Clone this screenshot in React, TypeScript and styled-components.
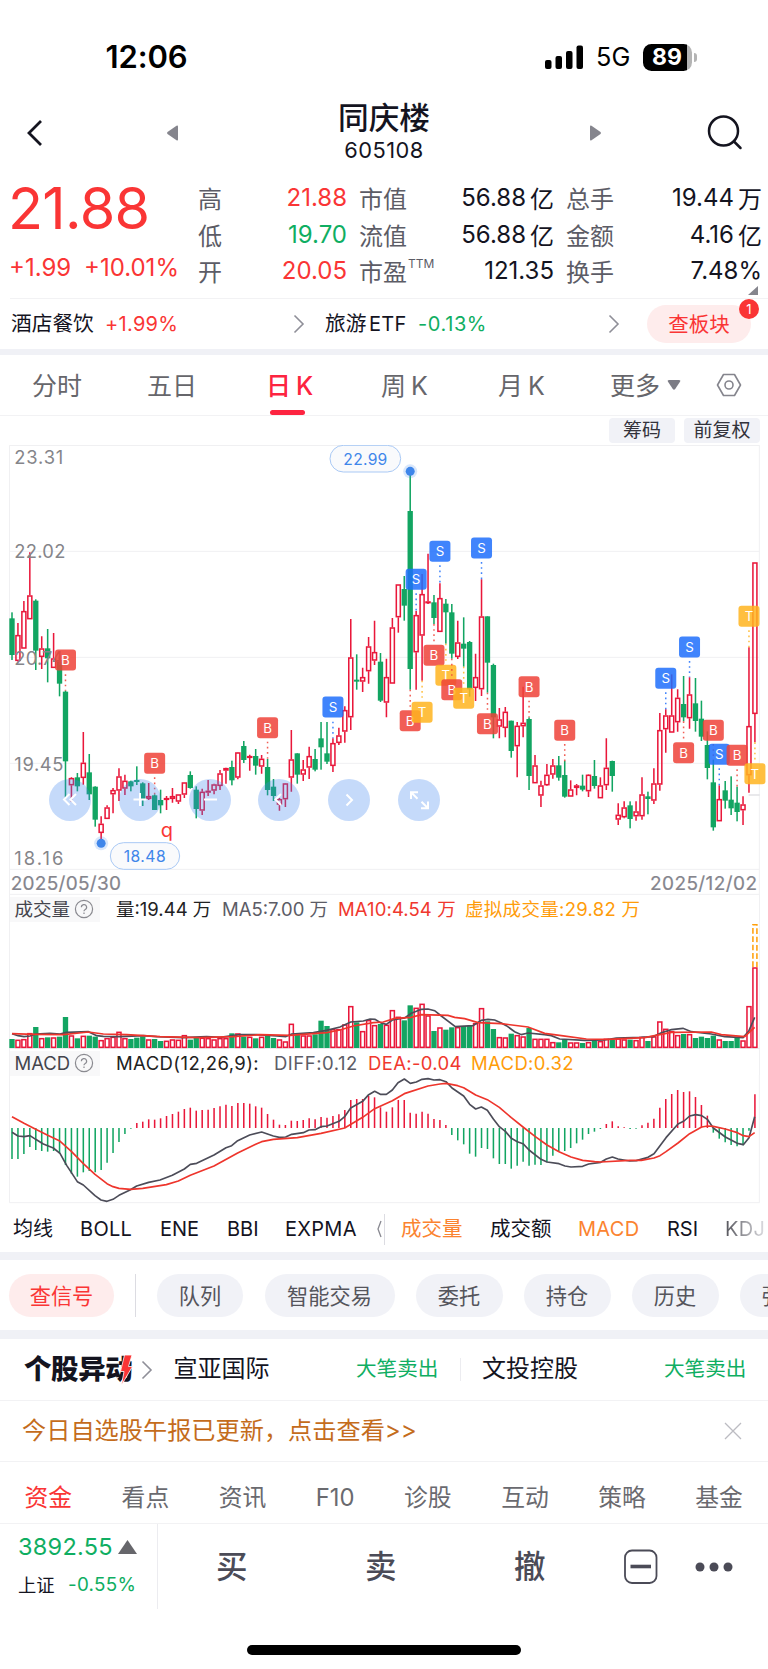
import React from 'react';
import styled, { createGlobalStyle, css } from 'styled-components';

const FONT = `Inter, "Noto Sans CJK SC", sans-serif`;
const RED = '#fa3535';
const GREEN = '#0fae62';
const INK = '#14141f';
const GREY = '#5c5c66';
const BLUE = '#3f86ea';

const Global = createGlobalStyle`
  * { box-sizing: border-box; }
  body { margin: 0; background: #fff; font-family: ${FONT}; color: ${INK}; }
`;

const Page = styled.main`
  width: 768px;
  height: 1669px;
  overflow: hidden;
  background: #fff;
`;

type TProps = { $w?: number; $s?: number; $c?: string; $ls?: number; $ml?: number; $wt?: number };
const T = styled.span<TProps>`
  flex: none;
  display: block;
  white-space: nowrap;
  line-height: 1.2;
  width: ${p => (p.$w ? `${p.$w}px` : 'auto')};
  font-size: ${p => p.$s ?? 24}px;
  color: ${p => p.$c ?? INK};
  letter-spacing: ${p => p.$ls ?? 0}px;
  margin-left: ${p => p.$ml ?? 0}px;
  font-weight: ${p => p.$wt ?? 400};
`;

const Row = styled.div<{ $h: number; $pl?: number; $pt?: number; $gap?: number; $line?: boolean }>`
  display: flex;
  align-items: center;
  gap: ${p => p.$gap ?? 0}px;
  height: ${p => p.$h}px;
  padding-left: ${p => p.$pl ?? 0}px;
  padding-top: ${p => p.$pt ?? 0}px;
  ${p => p.$line && css`border-bottom: 1px solid #f2f2f4;`}
  overflow: hidden;
`;
const Band = styled.div<{ $h: number }>`height: ${p => p.$h}px; background: #f0f1f6;`;

const Icon = styled.svg<{ $ml?: number }>`
  display: block;
  flex: none;
  margin-left: ${p => p.$ml ?? 0}px;
`;

/* ---------- status bar ---------- */
const StatusBar = styled.div`
  display: flex; align-items: center; height: 91px; padding: 23px 0 0 105.5px;
`;
const Battery = styled.div`
  width: 49px; height: 27px; margin-left: 13px; border-radius: 8.5px;
  background: linear-gradient(90deg, #000 44.5px, #b4b4b4 44.5px);
  color: #fff; font-size: 23px; font-weight: 700; line-height: 27px; padding-left: 9px;
`;
const BatteryTip = styled.i`width: 3px; height: 9px; margin-left: 2px; border-radius: 0 3px 3px 0; background: #b4b4b4;`;

/* ---------- title ---------- */
const TitleBar = styled.header`
  display: flex; align-items: center; height: 84px; padding-left: 26px; margin-bottom: 2px;
`;
const TitleText = styled.div`width: 100px; height: 66px; margin-left: 155px; text-align: center;`;
const Name = styled.h1`margin: 0; font-size: 30.7px; line-height: 36px; font-weight: 500; white-space: nowrap;`;
const Code = styled.div`font-size: 21.8px; line-height: 28px; letter-spacing: 0.5px;`;

/* ---------- quote ---------- */
const Quote = styled.section`
  display: flex; height: 122px; margin-left: 10px; border-bottom: 1px solid #f2f2f4;
`;
const PriceCol = styled.div`width: 188px;`;
const BigPrice = styled.div`font-size: 57.5px; line-height: 62px; color: ${RED}; letter-spacing: -0.7px; margin-left: -2px;`;
const Changes = styled.div`display: flex; height: 60px; align-items: center; margin: -1px 0 0 -1px;`;
const Stats = styled.div`display: grid; grid-template-columns: 149px 12px 195px 12px 196px; grid-auto-rows: 36.7px; padding-top: 2px;`;
const Stat = styled.div<{ $col: number }>`
  grid-column: ${p => p.$col}; display: flex; justify-content: space-between; align-items: center;
  font-size: 24px; white-space: nowrap; color: ${GREY}; position: relative;
`;
const Val = styled.span<{ $c?: string }>`display: flex; align-items: center; color: ${p => p.$c ?? INK}; gap: 4px;`;
const Sup = styled.sup`font-size: 12px; line-height: 1; position: absolute; left: 49px; top: 6px;`;
const Corner = styled.svg`position: absolute; right: 4px; bottom: -6px;`;

const Pill = styled.div<{ $w: number; $h: number; $ml?: number; $s: number; $hot?: boolean }>`
  flex: none; position: relative; width: ${p => p.$w}px; height: ${p => p.$h}px; margin-left: ${p => p.$ml ?? 0}px;
  border-radius: ${p => p.$h / 2}px; display: flex; align-items: center; justify-content: center;
  font-size: ${p => p.$s}px; white-space: nowrap; padding-bottom: 2px;
  color: ${p => (p.$hot ? RED : '#55555c')}; background: ${p => (p.$hot ? '#feecec' : '#f1f2f7')};
`;
const Badge = styled.b`
  position: absolute; left: 92px; top: -6px; width: 20px; height: 20px; border-radius: 50%;
  background: ${RED}; color: #fff; font-size: 13px; font-weight: 400; line-height: 20px; text-align: center;
`;
const Sector = styled.div`display: flex; align-items: center; height: 50px; padding-left: 11px;`;

/* ---------- period tabs ---------- */
const Tabs = styled.nav`display: flex; align-items: center; height: 61px; border-bottom: 1px solid #f2f2f4;`;
const Tab = styled.div<{ $ml: number; $w: number; $on?: boolean }>`
  flex: none; position: relative; display: flex; gap: 5px; align-items: center; height: 60px; font-size: 25px; white-space: nowrap;
  line-height: 1.2; padding-top: 1px;
  width: ${p => p.$w}px; margin-left: ${p => p.$ml}px; color: ${p => (p.$on ? '#fd2440' : '#66666b')};
  font-weight: ${p => (p.$on ? 500 : 400)};
  ${p => p.$on && css`&::after { content: ''; position: absolute; left: 4px; bottom: 0; width: 35px; height: 5px; border-radius: 2.5px; background: #fd2440; }`}
`;
const Chips = styled.div`display: flex; gap: 9px; height: 29px; padding: 2px 0 0 609px;`;
const Chip = styled.div<{ $w: number }>`
  width: ${p => p.$w}px; height: 25px; border-radius: 4px; background: #f1f2f7; color: #33333b;
  font-size: 19px; line-height: 25px; text-align: center; white-space: nowrap;
`;

/* ---------- charts ---------- */
const Plot = styled.svg`display: block; font-family: ${FONT};`;
const PriceArea = styled.div`position: relative; height: 450px;`;
const Tools = styled.div`position: absolute; left: 49px; top: 333.5px; display: flex; gap: 27.8px;`;
const Tool = styled.button`
  width: 42px; height: 42px; border: 0; padding: 0; border-radius: 50%; background: rgba(62, 132, 238, 0.3);
  svg { display: block; }
`;
const PlotHead = styled.div<{ $h: number }>`
  display: flex; align-items: center; height: ${p => p.$h}px; margin: 0 8px 0 9px; padding-top: 1px;
  border-left: 1px solid #f0f0f2; border-right: 1px solid #f0f0f2;
`;
const HeadTag = styled.div`
  display: flex; align-items: center; width: 90px; height: 25px; padding-left: 4.5px; background: #f8f8f9; margin-right: 16px; flex: none;
`;

/* one row per session: [up, high, bodyTop, bodyBottom, low, volumeTop, macdEnd] */
const days: number[][] = [
[0,517,535,645,660,447,807],[1,549,585,663,665,450,807],[1,483,513,626,626,448,792],[1,337,466,538,538,430,771],[0,478,482,632,690,411,780],
[1,589,625,651,687,445,783],[0,567,625,655,727,442,785],[1,579,655,684,684,443,783],[0,650,660,731,769,440,790],[0,752,755,964,1072,381,825],
[1,1012,1014,1036,1085,437,851],[0,999,1012,1039,1054,445,860],[1,876,968,1014,1034,438,847],[0,942,997,1063,1080,437,843],[0,1039,1040,1139,1160,440,847],
[1,1129,1151,1179,1198,451,840],[1,1096,1102,1137,1137,445,818],[1,1044,1050,1063,1120,441,789],[1,985,1009,1052,1083,426,756],[1,1004,1022,1046,1065,445,732],
[0,1022,1024,1039,1054,447,716],[0,979,1020,1026,1035,443,699],[0,1027,1030,1077,1098,440,695],[1,1029,1068,1077,1080,449,688],[0,1063,1066,1110,1110,447,689],
[0,1049,1080,1096,1120,453,685],[1,1068,1074,1080,1110,453,678],[1,1044,1068,1077,1088,449,672],[1,1063,1063,1085,1092,450,665],[1,1027,1027,1064,1074,436,657],
[0,994,1005,1044,1046,449,653],[0,1039,1049,1107,1135,444,662],[1,1046,1055,1112,1125,444,660],[1,1020,1052,1058,1068,445,659],[1,1031,1033,1052,1063,449,654],
[1,990,1000,1038,1050,445,649],[1,983,984,992,1031,445,644],[0,962,981,1021,1036,430,648],[1,936,937,1013,1018,431,639],[0,903,918,960,969,440,639],
[1,944,948,952,992,441,641],[0,927,948,977,1004,445,649],[1,945,956,980,1001,441,653],[0,957,981,1050,1066,436,672],[0,1017,1040,1068,1083,444,689],
[1,1074,1077,1094,1112,449,704],[1,1029,1030,1078,1101,455,705],[1,870,958,1013,1055,402,692],[0,940,940,1004,1031,434,693],[1,960,988,1004,1023,437,690],
[1,920,948,983,1017,437,685],[0,927,957,989,994,433,688],[0,846,895,922,989,392,681],[0,846,940,965,972,408,683],[1,895,909,978,996,418,678],
[1,863,886,909,915,418,673],[1,799,810,875,908,404,660],[1,537,652,832,870,349,630],[0,643,719,725,749,397,627],[1,683,711,725,756,424,627],
[1,591,619,694,731,391,618],[1,542,636,662,675,406,622],[0,639,665,782,786,402,652],[1,656,711,788,832,405,665],[1,534,562,731,731,361,652],
[1,433,433,532,578,381,630],[0,408,447,497,542,391,630],[0,100,213,687,749,346,668],[1,513,525,637,749,354,671],[1,402,462,587,722,342,665],
[1,341,484,489,492,377,671],[0,465,487,534,552,423,687],[1,430,474,576,576,413,690],[0,477,491,517,611,419,705],[0,492,517,641,656,412,735],
[1,542,607,651,657,412,751],[0,532,611,626,680,408,763],[0,603,606,748,770,408,791],[1,641,711,744,783,400,800],[1,418,529,748,768,355,774],
[0,529,529,668,758,394,777],[0,671,675,832,895,417,805],[1,804,838,860,895,442,822],[1,801,815,864,892,443,822],[0,842,842,933,953,431,836],
[1,846,857,919,1012,436,827],[1,740,848,859,892,440,815],[0,832,837,1008,1050,414,827],[1,945,976,1030,1030,447,824],[1,1022,1036,1067,1101,447,825],
[1,972,1004,1036,1038,447,817],[1,957,976,1004,1016,457,797],[0,948,976,1013,1022,457,785],[0,962,1005,1070,1073,447,783],[1,1021,1048,1070,1070,458,774],
[1,1032,1036,1044,1066,458,760],[0,1004,1037,1049,1054,459,749],[1,1003,1004,1054,1071,457,732],[0,960,1008,1038,1046,453,725],[1,1012,1036,1075,1075,454,717],
[1,895,983,1036,1050,447,702],[0,962,963,1008,1055,449,694],[1,1090,1124,1139,1155,446,709],[1,1084,1102,1132,1135,449,712],[0,1084,1096,1137,1165,449,717],
[1,1084,1114,1129,1142,451,716],[1,1012,1063,1129,1139,441,706],[0,1055,1069,1077,1123,453,698],[1,985,1030,1082,1092,440,686],[1,819,870,1034,1052,395,653],
[1,808,826,868,938,417,627],[1,703,826,878,878,424,612],[1,748,773,847,875,436,600],[0,708,792,832,844,432,606],[1,712,763,835,866,433,604],
[0,714,790,843,875,444,621],[0,782,836,890,903,440,645],[0,874,915,984,1018,444,677],[0,960,1027,1162,1172,437,728],[1,1036,1077,1144,1144,449,746],
[0,1023,1051,1082,1106,453,757],[0,1009,1079,1105,1125,453,765],[0,1040,1088,1116,1144,442,769],[1,1069,1093,1111,1155,452,766],[1,622,858,1006,1058,349,722],
[1,367,367,822,907,233,613],
];
const X = (i: number) => 36 + 17.83 * i;
const UP = '#e9173a';
const DOWN = '#12a562';

/* [session, kind, tagCentre, dotsFrom, dotsTo] */
const marks: [number, 'B' | 'S' | 'T', number, number, number][] = [
  [9, 'B', 660, 703, 752], [24, 'B', 970, 1012, 1063], [43, 'B', 863, 905, 957], [54, 'S', 801, 845, 895],
  [67, 'B', 842, 749, 800], [68, 'S', 418, 460, 513], [69, 'T', 817, 722, 775], [71, 'B', 646, 552, 605],
  [72, 'S', 334, 376, 430], [73, 'T', 706, 611, 664], [74, 'B', 749, 656, 708], [76, 'T', 775, 680, 735],
  [79, 'S', 324, 366, 418], [80, 'B', 851, 758, 810], [87, 'B', 740, 782, 832], [93, 'B', 871, 912, 965],
  [110, 'S', 715, 757, 808], [113, 'B', 938, 844, 896], [114, 'S', 621, 663, 712], [118, 'B', 871, 912, 960],
  [119, 'S', 943, 985, 1036], [122, 'B', 946, 988, 1040], [124, 'T', 529, 571, 622], [125, 'T', 1001, 907, 960],
];
const markColor = { B: '#ef4238', S: '#1f6ffb', T: '#ffb41e' };

const ma5 = '36,431 54,437 72,440 90,438 107,432 150,430 180,432 200,427 265,425 290,437 310,439 360,440 430,437 470,440 550,443 620,440 660,442 720,434 770,434 830,438 857,440 875,432 940,428 980,421 1020,411 1052,396 1090,393 1110,387 1125,388 1143,399 1159,403 1177,390 1214,384 1234,370 1264,358 1284,357 1304,362 1324,378 1366,410 1419,407 1444,391 1464,388 1484,390 1504,399 1519,407 1544,425 1564,434 1584,429 1634,434 1654,437 1679,447 1754,451 1814,450 1849,444 1924,442 1959,440 1984,428 2014,419 2049,415 2074,425 2134,432 2174,440 2229,443 2246,424 2264,382';
const ma10 = '36,431 100,433 190,434 265,426 310,432 380,434 480,440 600,443 700,440 780,434 870,436 980,428 1020,420 1060,408 1120,398 1150,396 1184,385 1234,382 1264,374 1344,376 1364,382 1394,386 1434,398 1504,401 1584,411 1634,430 1684,437 1759,447 1824,448 1934,443 1964,437 2014,427 2134,426 2164,434 2234,440 2264,412';
const diff = '36,727 54,738 72,740 90,737 107,748 130,762 160,774 180,790 200,826 232,875 250,885 285,917 303,930 321,934 339,928 357,916 390,900 410,888 446,877 480,870 517,856 553,837 571,823 590,820 642,795 678,773 695,767 713,752 749,735 785,726 820,738 838,742 857,741 875,733 910,728 927,720 945,719 963,710 981,708 1017,694 1034,680 1052,654 1088,634 1106,614 1124,604 1141,613 1159,613 1177,600 1194,578 1213,567 1231,580 1249,576 1266,568 1284,566 1302,570 1320,569 1338,575 1356,594 1391,618 1409,643 1427,657 1444,651 1462,661 1480,687 1498,710 1516,724 1534,745 1552,755 1569,761 1587,780 1623,808 1641,816 1677,821 1695,828 1713,831 1748,829 1766,822 1802,817 1819,807 1837,801 1854,807 1889,813 1909,812 1944,802 1962,791 1998,743 2034,702 2052,693 2069,678 2087,674 2105,677 2123,689 2140,714 2176,741 2212,760 2230,764 2247,743 2264,680';
const dea = '36,680 72,700 107,718 143,736 178,752 214,784 250,821 285,853 321,881 339,890 357,895 392,898 428,895 499,884 535,873 571,856 642,828 713,789 767,763 785,755 820,748 892,743 963,730 1034,714 1088,682 1124,656 1177,632 1213,611 1284,588 1320,582 1338,580 1373,587 1391,593 1427,615 1462,629 1498,652 1534,683 1569,711 1605,739 1641,765 1677,785 1713,801 1748,811 1784,815 1802,816 1889,811 1924,811 1962,804 1980,797 1998,785 2034,759 2069,731 2105,711 2123,708 2140,709 2176,717 2212,728 2230,737 2247,740 2264,728';

const Frame = ({ y1, y2 }: { y1: number; y2: number }) => (
  <path d={`M28.5 ${y1}V${y2}M2278 ${y1}V${y2}`} stroke="#f0f0f2" strokeWidth="3" />
);

const AxisLabel = ({ y, children }: { y: number; children: string }) => (
  <text x={43} y={y + 20} fontSize={55} fill="#85858a" textLength={children.startsWith('22') ? 153 : 147}>{children}</text>
);

const PriceChart = () => (
  <Plot width="768" height="450" viewBox="0 15 2304 1350">
    <path d="M28 16.5H2279M28 334H2279M28 652H2279M28 970H2279M28 1288H2279M28 1363H2279" stroke="#f0f0f2" strokeWidth="3" />
    <Frame y1={16} y2={1365} />
    <path d="M2246 1065H2279" stroke="#dedee2" strokeWidth="4" />
    {days.map(([up, h, t, b, l], i) => {
      const x = X(i);
      return up ? (
        <g key={i} stroke={UP} strokeWidth="4.6" fill="none">
          <path d={`M${x} ${h}V${t}M${x} ${b}V${l}`} />
          <rect x={x - 6} y={t + 2} width="12" height={Math.max(b - t - 4, 2)} />
        </g>
      ) : (
        <g key={i} fill={DOWN}>
          <rect x={x - 2.3} y={h} width="4.6" height={l - h} />
          <rect x={x - 8} y={t} width="16" height={b - t} />
        </g>
      );
    })}
    <AxisLabel y={52}>23.31</AxisLabel>
    <AxisLabel y={334}>22.02</AxisLabel>
    <AxisLabel y={654}>20.74</AxisLabel>
    <AxisLabel y={972}>19.45</AxisLabel>
    <AxisLabel y={1256}>18.16</AxisLabel>
    {marks.map(([i, k, y, a, b]) => (
      <g key={i}>
        <path d={`M${X(i)} ${a}V${b}`} stroke={markColor[k]} strokeWidth="4.5" strokeDasharray="5 10.5" opacity="0.85" />
        <rect x={X(i) - 31.5} y={y - 31.5} width="63" height="63" rx="9" fill={markColor[k]} opacity="0.85" />
        <text x={X(i)} y={y + 14.5} fontSize="40" fill="#fff" textAnchor="middle">{k}</text>
      </g>
    ))}
    <circle cx={X(67)} cy="94" r="21" fill={BLUE} opacity="0.2" />
    <circle cx={X(67)} cy="94" r="13.5" fill={BLUE} />
    <circle cx={X(15)} cy="1210" r="21" fill={BLUE} opacity="0.2" />
    <circle cx={X(15)} cy="1210" r="13.5" fill={BLUE} />
    <g fill="#f9fafc" stroke="#a9c9f5" strokeWidth="3">
      <rect x="990" y="16" width="212" height="80" rx="40" />
      <rect x="331" y="1208" width="208" height="80" rx="40" />
    </g>
    <text x="1030" y="74" fontSize="47" fill={BLUE} textLength="132">22.99</text>
    <text x="371" y="1267" fontSize="47" fill={BLUE} textLength="126">18.48</text>
    <text x="482" y="1190" fontSize="60" fill={RED}>q</text>
    <text x="32" y="1350" fontSize="57" fill="#85858d" stroke="#85858d" strokeWidth="0.6" textLength="331">2025/05/30</text>
    <text x="1950" y="1350" fontSize="57" fill="#85858d" stroke="#85858d" strokeWidth="0.6" textLength="321">2025/12/02</text>
  </Plot>
);

const VolumeChart = () => (
  <Plot width="768" height="128" viewBox="0 96 2304 384">
    <Frame y1={96} y2={480} />
    <path d="M28 475H2279" stroke="#e6e6ea" strokeWidth="3" />
    {days.map(([up, , , , , v], i) =>
      up ? <rect key={i} x={X(i) - 6} y={v + 1} width="12" height={471 - v} fill="none" stroke={UP} strokeWidth="4.6" />
         : <rect key={i} x={X(i) - 8} y={v} width="16" height={474 - v} fill={DOWN} />
    )}
    <path d={`M${X(125) - 6} 231V104H${X(125) + 6}V231`} fill="none" stroke="#ff9f0a" strokeWidth="4.6" strokeDasharray="17 8" />
    <polyline points={ma5} fill="none" stroke="#4c4c58" strokeWidth="5" />
    <polyline points={ma10} fill="none" stroke="#ee352c" strokeWidth="5" />
  </Plot>
);

const MacdChart = () => (
  <Plot width="768" height="130" viewBox="0 555 2304 390">
    <Frame y1={555} y2={938} />
    <path d="M28 938H2279" stroke="#f0f0f2" strokeWidth="3" />
    {days.map((d, i) => <path key={i} d={`M${X(i)} 714V${d[6]}`} stroke={d[6] < 714 ? UP : DOWN} strokeWidth="4.6" />)}
    <polyline points={diff} fill="none" stroke="#4c4c58" strokeWidth="5" strokeLinejoin="round" />
    <polyline points={dea} fill="none" stroke="#ee352c" strokeWidth="5" strokeLinejoin="round" />
  </Plot>
);

const Help = () => (
  <Icon $ml={3} width="20" height="20" viewBox="0 0 20 20" fill="none" stroke="#8a8a90" strokeWidth="1.2">
    <circle cx="10" cy="10" r="8.6" />
    <path d="M7.4 8.2a2.6 2.6 0 1 1 3.9 2.2c-.9.5-1.3.9-1.3 1.9M10 13.6v1.5" />
  </Icon>
);
const Chevron = ({ ml }: { ml: number }) => (
  <Icon $ml={ml} width="12" height="20" viewBox="0 0 12 20" fill="none" stroke="#8f8f98" strokeWidth="1.6">
    <path d="M1.5 1.5L10 10L1.5 18.5" />
  </Icon>
);

const toolIcons = ['M20.5 15L15 20.5L20.5 26M27 15L21.5 20.5L27 26', 'M14.5 20.5H27.5M21 14V27', 'M15 20.5H28', 'M23 15L17.5 20.5L23 26', 'M18.5 15.5L24 21L18.5 26.5', 'M13 20V13.2H20M13.5 13.7L19.5 19.7M30 22.5V29.3H23M29.5 28.8L23.5 22.8'];

/* ---------- lower page ---------- */
const VLine = styled.i<{ $h: number; $ml: number; $c?: string }>`flex: none; width: 1px; height: ${p => p.$h}px; margin-left: ${p => p.$ml}px; background: ${p => p.$c ?? '#dcdce2'};`;
const Brand = styled.div`
  position: relative; flex: none; width: 108px; font-size: 27.5px; font-weight: 900; letter-spacing: -0.4px; white-space: nowrap; line-height: 1.2;
  svg { position: absolute; left: 95px; top: 2px; }
`;
const Fade = styled(T)`background: linear-gradient(90deg, #55555c, #e4e4e8); -webkit-background-clip: text; color: transparent;`;
const BottomBar = styled.footer`display: flex; height: 85px; align-items: center;`;
const IndexBox = styled.div`width: 158px; height: 85px; border-right: 1px solid #ececf0; padding: 6px 0 0 18px;`;
const Home = styled.div`width: 274px; height: 10px; border-radius: 5px; background: #000; margin: 36px 0 0 247px;`;

export default function App() {
  return (
    <Page>
      <Global />
      <StatusBar>
        <T $s={31} $w={84} $wt={600} $ls={-0.1} $c="#000">12:06</T>
        <Icon $ml={355.5} width="39" height="25" viewBox="0 0 39 25">
          <rect x="0" y="15" width="6.5" height="9" rx="2" /><rect x="10.5" y="11" width="6.5" height="13" rx="2" />
          <rect x="21" y="6" width="6.5" height="18" rx="2" /><rect x="31.5" y="0.5" width="6.5" height="23.5" rx="2" />
        </Icon>
        <T $s={25.3} $w={34} $ml={12} $c="#000">5G</T>
        <Battery>89</Battery><BatteryTip />
      </StatusBar>

      <TitleBar>
        <Icon width="18" height="28" viewBox="0 0 18 28" fill="none" stroke={INK} strokeWidth="2.8"><path d="M15 2L3 14L15 26" /></Icon>
        <Icon $ml={122} width="13" height="18" viewBox="0 0 13 18" fill="#85858d"><path d="M12 2.5V15.5Q12 17 10.5 16.2L1.5 10Q0.5 9 1.5 8L10.5 1.8Q12 1 12 2.5Z" /></Icon>
        <TitleText><Name>同庆楼</Name><Code>605108</Code></TitleText>
        <Icon $ml={155} width="13" height="18" viewBox="0 0 13 18" fill="#85858d"><path d="M1 2.5V15.5Q1 17 2.5 16.2L11.5 10Q12.5 9 11.5 8L2.5 1.8Q1 1 1 2.5Z" /></Icon>
        <Icon $ml={103} width="38" height="38" viewBox="0 0 38 38" fill="none" stroke={INK} strokeWidth="2.5" strokeLinecap="round"><circle cx="18.5" cy="17" r="14.5" /><path d="M29 27.5L35.5 34" /></Icon>
      </TitleBar>

      <Quote>
        <PriceCol>
          <BigPrice>21.88</BigPrice>
          <Changes><T $w={61} $c={RED}>+1.99</T><T $ml={14} $c={RED}>+10.01%</T></Changes>
        </PriceCol>
        <Stats>
          <Stat $col={1}>高<Val $c={RED}>21.88</Val></Stat>
          <Stat $col={3}>市值<Val>56.88<span>亿</span></Val></Stat>
          <Stat $col={5}>总手<Val>19.44<span>万</span></Val></Stat>
          <Stat $col={1}>低<Val $c={GREEN}>19.70</Val></Stat>
          <Stat $col={3}>流值<Val>56.88<span>亿</span></Val></Stat>
          <Stat $col={5}>金额<Val>4.16<span>亿</span></Val></Stat>
          <Stat $col={1}>开<Val $c={RED}>20.05</Val></Stat>
          <Stat $col={3}>市盈<Sup>TTM</Sup><Val>121.35</Val></Stat>
          <Stat $col={5}>换手<Val>7.48%</Val><Corner width="10" height="9"><path d="M10 0V9H0Z" fill="#85858d" /></Corner></Stat>
        </Stats>
      </Quote>
      <Sector>
        <T $s={20.7} $w={84}>酒店餐饮</T><T $s={20} $w={75} $ml={10} $ls={0.3} $c={RED}>+1.99%</T>
        <Chevron ml={113} />
        <T $s={20.7} $w={42} $ml={20}>旅游</T><T $s={20} $w={39} $ml={2} $ls={0.3}>ETF</T><T $s={20} $w={72} $ml={10} $ls={0.6} $c={GREEN}>-0.13%</T>
        <Chevron ml={118} />
        <Pill $w={104} $h={38} $ml={27} $s={20.5} $hot>查板块<Badge>1</Badge></Pill>
      </Sector>
      <Band $h={6} />

      <Tabs>
        <Tab $ml={32} $w={52}>分时</Tab>
        <Tab $ml={63} $w={52}>五日</Tab>
        <Tab $ml={67} $w={52} $on><span>日</span><span>K</span></Tab>
        <Tab $ml={63} $w={52}><span>周</span><span>K</span></Tab>
        <Tab $ml={65} $w={52}><span>月</span><span>K</span></Tab>
        <Tab $ml={60} $w={52}>更多</Tab>
        <Icon $ml={5} width="14" height="12" viewBox="0 0 14 12" fill="#7c7c85"><path d="M2 1H12Q14 1 13 2.8L8.2 10Q7 11.5 5.8 10L1 2.8Q0 1 2 1Z" /></Icon>
        <Icon $ml={35} width="26" height="24" viewBox="0 0 26 24" fill="none" stroke="#85858d" strokeWidth="1.6"><path d="M7.5 1.5H18.5L24.5 12L18.5 22.5H7.5L1.5 12Z" strokeLinejoin="round" /><circle cx="13" cy="12" r="4" /></Icon>
      </Tabs>
      <Chips><Chip $w={66}>筹码</Chip><Chip $w={76}>前复权</Chip></Chips>

      <PriceArea>
        <PriceChart />
        <Tools>{toolIcons.map(d => <Tool key={d}><svg width="42" height="42" fill="none" stroke="#fff" strokeWidth="2"><path d={d} /></svg></Tool>)}</Tools>
      </PriceArea>
      <PlotHead $h={27}>
        <HeadTag><T $s={18.5} $w={56} $c="#44444c">成交量</T><Help /></HeadTag>
        <T $s={18.5} $w={96} $c="#222">量:19.44 万</T>
        <T $s={18.5} $w={105} $ml={10} $c={GREY}>MA5:7.00 万</T>
        <T $s={18.5} $w={118} $ml={11} $ls={0.1} $c="#f0382e">MA10:4.54 万</T>
        <T $s={18.5} $w={175} $ml={9} $ls={0.3} $c="#ff9c0a">虚拟成交量:29.82 万</T>
      </PlotHead>
      <VolumeChart />
      <PlotHead $h={25}>
        <HeadTag><T $s={18.5} $w={56} $c="#44444c">MACD</T><Help /></HeadTag>
        <T $s={18.5} $w={144} $ls={0.4} $c="#222">MACD(12,26,9):</T>
        <T $s={18.5} $w={84} $ml={14} $ls={0.5} $c={GREY}>DIFF:0.12</T>
        <T $s={18.5} $w={94} $ml={10} $ls={0.35} $c="#f0382e">DEA:-0.04</T>
        <T $s={18.5} $w={104} $ml={9} $ls={0.35} $c="#ff9c0a">MACD:0.32</T>
      </PlotHead>
      <MacdChart />

      <Row $h={47} $pl={13} $pt={1}>
        <T $s={20} $w={40}>均线</T><T $s={20} $w={53} $ml={27} $ls={0.3}>BOLL</T><T $s={20} $w={40} $ml={27}>ENE</T>
        <T $s={20} $w={33} $ml={27}>BBI</T><T $s={20} $w={73} $ml={25} $ls={0.3}>EXPMA</T>
        <Icon $ml={19} width="5" height="18" viewBox="0 0 5 18" fill="none" stroke="#888890" strokeWidth="1.3"><path d="M4 1L1 9L4 17" /></Icon>
        <VLine $h={31} $ml={2} />
        <T $s={20.5} $w={62} $ml={16} $c="#fb8330">成交量</T><T $s={20.5} $w={62} $ml={27}>成交额</T>
        <T $s={20} $w={62} $ml={26} $ls={0.3} $c="#fb8330">MACD</T><T $s={20} $w={32} $ml={27}>RSI</T><Fade $s={20} $w={42} $ml={26} $ls={0.3}>KDJ</Fade>
      </Row>
      <Band $h={8} />
      <Row $h={70}>
        <Pill $w={105} $h={43} $ml={9} $s={21.2} $hot>查信号</Pill>
        <VLine $h={43} $ml={21} />
        <Pill $w={86} $h={43} $ml={21} $s={21.2}>队列</Pill>
        <Pill $w={130} $h={43} $ml={21.5} $s={21.2}>智能交易</Pill>
        <Pill $w={87} $h={43} $ml={21} $s={21.2}>委托</Pill>
        <Pill $w={87} $h={43} $ml={21} $s={21.2}>持仓</Pill>
        <Pill $w={87} $h={43} $ml={21} $s={21.2}>历史</Pill>
        <Pill $w={87} $h={43} $ml={21} $s={21.2}>强弱</Pill>
      </Row>
      <Band $h={9} />
      <Row $h={62} $pl={24} $line>
        <Brand>个股异动
          <svg width="14" height="30" viewBox="0 0 14 30"><path d="M5.5 0H13L9.5 11.5H13.5L2.5 30L5 16.5H1.5Z" fill="#fa3535" stroke="#fff" strokeWidth="0.8" /></svg>
        </Brand>
        <Chevron ml={9} />
        <T $s={24} $w={97} $ml={20.5}>宣亚国际</T><T $s={20.6} $w={84} $ml={85.5} $c={GREEN}>大笔卖出</T>
        <VLine $h={23} $ml={20} $c="#ececf0" />
        <T $s={24} $w={97} $ml={21}>文投控股</T><T $s={20.6} $w={84} $ml={85} $c={GREEN}>大笔卖出</T>
      </Row>
      <Row $h={61} $pl={22} $line>
        <T $s={24.2} $w={398} $c="#c46c1c">今日自选股午报已更新，点击查看&gt;&gt;</T>
        <Icon $ml={304} width="18" height="18" viewBox="0 0 18 18" stroke="#bcbcc2" strokeWidth="1.3"><path d="M1 1L17 17M17 1L1 17" /></Icon>
      </Row>
      <Row $h={62} $pl={24.5} $pt={11} $gap={49.5} $line>
        {['资金', '看点', '资讯', 'F10', '诊股', '互动', '策略', '基金'].map((s, i) => (
          <T key={s} $s={23.8} $c={i ? '#6a6a6f' : RED}>{s}</T>
        ))}
      </Row>
      <BottomBar>
        <IndexBox>
          <Row $h={34}><T $s={23.5} $w={95} $ls={0.25} $c={GREEN}>3892.55</T><Icon $ml={5} width="19" height="14"><path d="M9.5 0L19 14H0Z" fill="#66666b" /></Icon></Row>
          <Row $h={42} $pt={1}><T $s={18.3} $w={37}>上证</T><T $s={18.8} $w={70} $ml={13} $ls={0.3} $c={GREEN}>-0.55%</T></Row>
        </IndexBox>
        <T $s={31.5} $w={32} $ml={58} $wt={500} $c="#4b4b57">买</T>
        <T $s={31.5} $w={32} $ml={117} $wt={500} $c="#4b4b57">卖</T>
        <T $s={31.5} $w={32} $ml={117} $wt={500} $c="#4b4b57">撤</T>
        <Icon $ml={78} width="34" height="36" viewBox="0 0 34 36" fill="none" stroke="#4b4b57"><rect x="1" y="1.5" width="31.5" height="32.5" rx="7" strokeWidth="1.8" /><path d="M6.5 17.5H27" strokeWidth="3.6" /></Icon>
        <Icon $ml={37} width="38" height="10" fill="#4b4b57"><circle cx="5" cy="5" r="4.5" /><circle cx="19" cy="5" r="4.5" /><circle cx="33" cy="5" r="4.5" /></Icon>
      </BottomBar>
      <Home />
    </Page>
  );
}
